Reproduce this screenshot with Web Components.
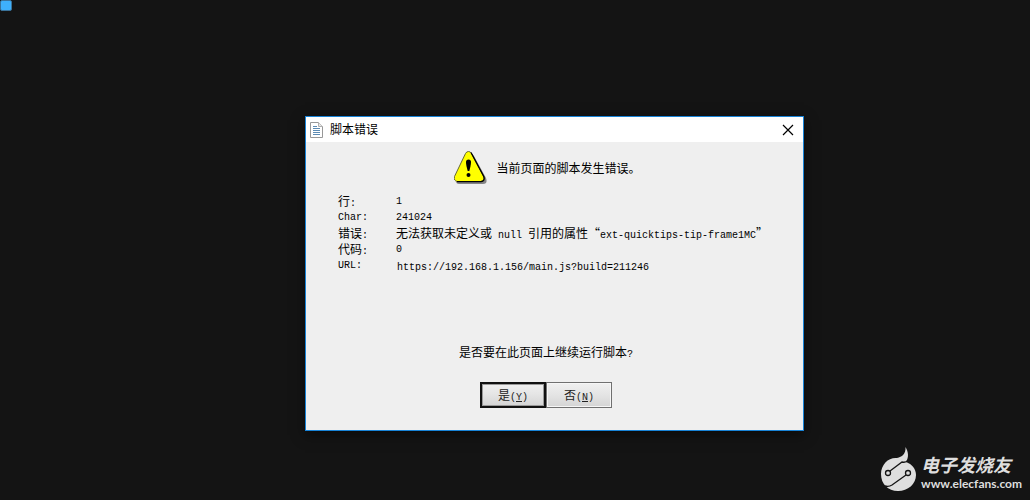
<!DOCTYPE html>
<html lang="zh-CN">
<head>
<meta charset="utf-8">
<title>脚本错误</title>
<style>
html, body { margin: 0; height: 100%; background: #141414; }
body { font: 12px/16px "Noto Sans CJK SC", sans-serif; color: #000; overflow: hidden; }
</style>
</head>
<body>
<desktop-screen>
  <error-dialog heading="脚本错误">
    <error-message>当前页面的脚本发生错误。</error-message>
    <error-details></error-details>
    <dialog-question></dialog-question>
    <dialog-actions>
      <dialog-button key="Y" primary>是</dialog-button>
      <dialog-button key="N">否</dialog-button>
    </dialog-actions>
  </error-dialog>
  <site-mark slot="mark"></site-mark>
</desktop-screen>
<script>
function define(name, html, setup) {
  const template = document.createElement('template');
  template.innerHTML = html;
  customElements.define(name, class extends HTMLElement {
    constructor() {
      super();
      this.attachShadow({ mode: 'open' }).append(template.content.cloneNode(true));
    }
    connectedCallback() {
      if (setup) setup(this, this.shadowRoot);
    }
  });
}

define('desktop-screen', `
<style>
:host { display: block; position: relative; min-height: 100vh; background: #141414; }
.tile { width: 12px; height: 11px; background: #3eb0fb; border: 1px solid #3a7299; border-radius: 2px; box-sizing: border-box; }
::slotted(error-dialog) { position: absolute; left: 305px; top: 116px; }
::slotted(site-mark) { position: absolute; right: 8px; bottom: 8px; }
</style>
<div class="tile"></div>
<slot></slot>
<slot name="mark"></slot>`);

define('error-dialog', `
<style>
:host { display: block; width: 499px; box-sizing: border-box; border: 1px solid #1883d7; background: #efefef; box-shadow: 0 4px 12px rgba(0,0,0,.5); }
header { display: flex; align-items: center; height: 25px; background: #fff; padding: 0 9px 0 4px; gap: 7px; }
h1 { font: inherit; margin: 0; padding-bottom: 2px; flex: 1; }
button { border: 0; padding: 0; background: none; width: 12px; height: 12px; display: flex; }
svg { display: block; }
main { padding: 9px 17px 22px 0; }
</style>
<header>
  <svg width="13" height="16" viewBox="0 0 13 16" aria-hidden="true">
    <path d="M.5.5h8l4 4v11H.5z" fill="#fff" stroke="#989898"/>
    <path d="M8.500.5v4h4" fill="#e8e8e8" stroke="#b0b0b0"/>
    <path d="M3 4.500h4M3 6.500h7M3 8.500h7M3 10.500h7M3 12.500h7" stroke="#5c8bb4"/>
  </svg>
  <h1></h1>
  <button type="button" aria-label="关闭"><svg width="12" height="12" viewBox="0 0 12 12"><path d="M1 1l10 10M11 1L1 11" stroke="#000" stroke-width="1.200"/></svg></button>
</header>
<main><slot></slot></main>`, (el, root) => {
  root.querySelector('h1').textContent = el.getAttribute('heading');
});

define('error-message', `
<style>
:host { display: flex; justify-content: center; align-items: center; gap: 9px; padding-left: 3px; }
svg { display: block; }
</style>
<svg width="33" height="33" viewBox="0 0 33 33" aria-hidden="true">
  <path d="M17 3q2 0 3 2l12 22q2 6-3 6H5q-3 0-3-3z" fill="#858585"/>
  <path d="M14.500.5q2 0 3 2l12 22.500q2 5-3 5.500H3.500q-4-.5-3-5L11.500 2.500q1-2 3-2z" fill="#ff0" stroke="#666636"/>
  <path d="M17 1.500l13 24.500q1 4-3 4.700H3" fill="none" stroke="#000" stroke-width="1.300"/>
  <path d="M12 11q0-2.500 2.500-2.500T17 11q0 3-1.700 9h-1.600Q12 14 12 11z"/>
  <circle cx="14.500" cy="24" r="2"/>
</svg>
<span><slot></slot></span>`);

define('error-details', `
<style>
:host { display: block; padding: 9px 0 0 32px; height: 80px; }
dl { display: grid; grid-template-columns: 58px 1fr; grid-auto-rows: 16px; margin: 0; white-space: nowrap; }
dd { margin: 0; }
.m, input { font-family: "Liberation Mono", monospace; font-size: 10px; }
span.m { line-height: 1; }
dt.m, dd.m { line-height: 18px; }
input { display: block; box-sizing: border-box; width: 100%; height: 20px; padding: 0 1px; margin: 0; border: 0; background: none; color: inherit; outline: 0; }
</style>
<dl>
  <dt>行<span class="m">:</span></dt><dd class="m">1</dd>
  <dt class="m">Char:</dt><dd class="m">241024</dd>
  <dt>错误<span class="m">:</span></dt><dd>无法获取未定义或<span class="m"> null </span>引用的属性“<span class="m">ext-quicktips-tip-frame1MC</span>”</dd>
  <dt>代码<span class="m">:</span></dt><dd class="m">0</dd>
  <dt class="m"><label for="url">URL:</label></dt><dd><input id="url" readonly value="https://192.168.1.156/main.js?build=211246"></dd>
</dl>`);

define('dialog-question', `
<style>
:host { display: block; text-align: center; padding-top: 71px; }
p { margin: 0; }
.m { font-family: "Liberation Mono", monospace; font-size: 10px; line-height: 1; }
</style>
<p>是否要在此页面上继续运行脚本<span class="m">?</span></p>`);

define('dialog-actions', `
<style>:host { display: flex; justify-content: center; padding-top: 22px; }</style>
<slot></slot>`);

define('dialog-button', `
<style>
:host { display: block; }
button { display: block; width: 66px; height: 26px; box-sizing: border-box; padding: 0; font: inherit; color: #222; border: 1px solid #707070; background: linear-gradient(#f0f0f0, #e4e4e4 50%, #d4d4d4); box-shadow: inset 0 0 0 1px #f6f6f6; }
:host([primary]) button { border: 2px solid #111; box-shadow: inset 0 0 0 1px #999; }
.m { font-family: "Liberation Mono", monospace; font-size: 10px; line-height: 1; }
</style>
<button type="button"><slot></slot><span class="m">(<u></u>)</span></button>`, (el, root) => {
  root.querySelector('u').textContent = el.getAttribute('key');
});

define('site-mark', `
<style>
:host { display: flex; align-items: flex-end; gap: 4px; color: #dedede; }
svg { display: block; }
.name { font: italic bold 18px/24px "Noto Sans CJK SC", sans-serif; }
.site { font: bold 12px/16px Lato, sans-serif; }
.text { display: flex; flex-direction: column; }
a { color: inherit; text-decoration: none; }
</style>
<svg width="37" height="46" viewBox="0 0 37 46" aria-hidden="true">
  <path d="M25.500 1c3 5 3.500 10 .5 15 6 2 10 7 10 13 0 9-8 16-18 16S1 38 1 28 9 11 17 12C22 11 26 8 25.500 1z" fill="#dedede"/>
  <g fill="none" stroke="#141414" stroke-width="1.300">
    <circle cx="8" cy="27" r="2.500"/><circle cx="28" cy="27" r="2.500"/>
    <path d="M10 25l12-9q4 1 6-2M26 29L12 39q-3 2-7 1"/>
  </g>
</svg>
<div class="text"><span class="name">电子发烧友</span><a class="site" href="#">www.elecfans.com</a></div>`);
</script>
</body>
</html>
